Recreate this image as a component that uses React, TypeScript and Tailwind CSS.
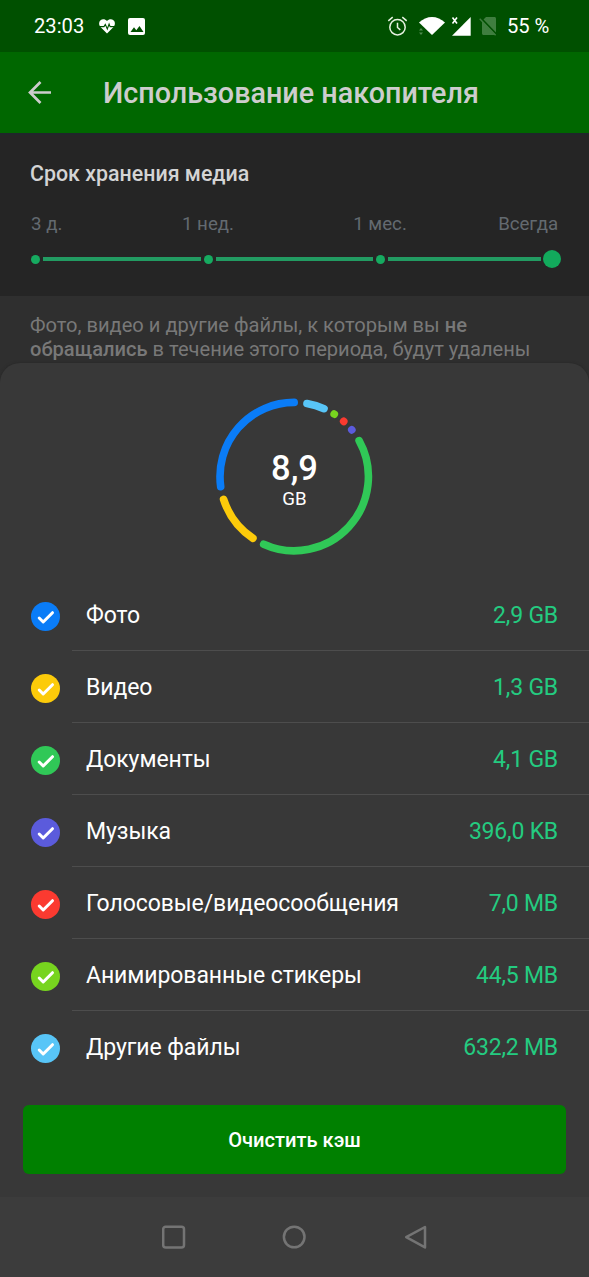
const categories = [
  { name: 'Фото', size: '2,9 GB', color: '#0a7cf7' },
  { name: 'Видео', size: '1,3 GB', color: '#fccb0a' },
  { name: 'Документы', size: '4,1 GB', color: '#30c857' },
  { name: 'Музыка', size: '396,0 KB', color: '#5b5bdc' },
  { name: 'Голосовые/видеосообщения', size: '7,0 MB', color: '#fb3a30' },
  { name: 'Анимированные стикеры', size: '44,5 MB', color: '#77d41f' },
  { name: 'Другие файлы', size: '632,2 MB', color: '#58c5f7' },
]

// angles in degrees, clockwise from the top
const segments = [
  { from: 262.2, to: 360, color: '#0a7cf7' },
  { from: 213.8, to: 252.2, color: '#fccb0a' },
  { from: 61, to: 204.3, color: '#30c857' },
  { from: 50.9, to: 51, color: '#5b5bdc' },
  { from: 41.8, to: 41.9, color: '#fb3a30' },
  { from: 32.6, to: 32.7, color: '#77d41f' },
  { from: 9.9, to: 23.7, color: '#58c5f7' },
]

const CENTER_X = 79.2
const CENTER_Y = 79.6
const RADIUS = 74.2

function point(angle: number) {
  const rad = (angle * Math.PI) / 180
  return `${(CENTER_X + RADIUS * Math.sin(rad)).toFixed(2)} ${(CENTER_Y - RADIUS * Math.cos(rad)).toFixed(2)}`
}

function StatusBar() {
  return (
    <div className="flex h-[52px] items-center bg-[#005000] pl-[34px] text-[20.2px] text-white">
      <span className="w-[65px] leading-none">23:03</span>
      <svg className="h-[15px] w-[16px]" viewBox="0 0 16 15">
        <path fill="#fff" d="M8 14.5 1.5 8C-.3 6-.3 3 1.300 1.500 3.200-.3 6-.2 8 2c2-2.200 4.800-2.300 6.700-.5C16.300 3 16.300 6 14.500 8z" />
        <path fill="none" stroke="#005000" strokeWidth="1.100" d="M0 7.600h5l1.300-2.200 2 4.600 1.800-5 1 2.600H16" />
      </svg>
      <svg className="ml-[13px] h-[17px] w-[17px]" viewBox="0 0 17 17">
        <rect width="17" height="17" rx="2" fill="#fff" />
        <path fill="#005000" d="M2.500 14 6 9.300l2.300 3L11.500 8l4 6z" />
      </svg>
      <svg className="ml-[242px] h-[20px] w-[20px]" viewBox="0 0 20 20" fill="none" stroke="#e6f2e0" strokeWidth="1.500">
        <circle cx="10.500" cy="11.200" r="7.700" />
        <path d="M10.500 6.700v4.800l2.800 2.300M1.300 4.800 5.700 1.200M19.700 4.800l-4.400-3.600" />
      </svg>
      <svg className="ml-[12px] h-[20px] w-[27px]" viewBox="0 0 27 20">
        <path fill="#fff" d="M0 6.500C7.500-1 18.500-1 26 6.500L13 19z" />
        <path fill="#4f8b4f" d="m0 14.500 2-2.600 2 2.600zM0 16.500l2 2.500 2-2.500z" />
      </svg>
      <svg className="ml-[5px] h-[20px] w-[20px]" viewBox="0 0 20 20">
        <path fill="#fff" d="M19.700 1v18.700H1z" />
        <path fill="none" stroke="#fff" strokeWidth="1.600" d="m1.500 1.500 4.500 6M6 1.500l-4.500 6" />
      </svg>
      <svg className="ml-[8px] h-[20px] w-[18px]" viewBox="0 0 18 20">
        <path fill="#3f7e3f" d="M7 1h8.500c.8 0 1.500.7 1.500 1.500v15c0 .8-.7 1.500-1.500 1.500h-11C3.700 19 3 18.300 3 17.500V5z" />
        <path fill="none" stroke="#005000" strokeWidth="1.800" d="M2 2.200 18 18.800" />
        <path fill="none" stroke="#3f7e3f" strokeWidth="1.400" d="M.7 2.800 16.600 19.300" />
      </svg>
      <span className="ml-[10px] leading-none tracking-[-0.1px]">55 %</span>
    </div>
  )
}

function AppBar() {
  return (
    <header className="flex h-[81px] items-center bg-[#006700] pl-[28px] text-[#cdcdcd]">
      <svg className="h-[24px] w-[24px]" viewBox="0 0 24 24" fill="none" stroke="currentColor" strokeWidth="2.700">
        <path d="M23 11.500H2.500M12.500 1 2 11.500 12.500 22" />
      </svg>
      <h1 className="mt-px ml-[51px] text-[28.750px] leading-none font-medium whitespace-nowrap">Использование накопителя</h1>
    </header>
  )
}

function KeepMedia() {
  return (
    <section className="h-[163px] border-t-2 border-[#20262a] bg-[#252525] pl-[31px]">
      <h2 className="-ml-px pt-[26px] text-[21.400px] leading-[26px] font-medium text-[#d4d4d4]">Срок хранения медиа</h2>
      <div className="mt-[25px] flex w-[527px] text-[18.700px] leading-[24px] text-[#636a70]">
        <span className="w-[91px]">3 д.</span>
        <span className="w-[172px] text-center">1 нед.</span>
        <span className="w-[172px] text-center">1 мес.</span>
        <span className="flex-1 text-right tracking-[-0.050px]">Всегда</span>
      </div>
      <div className="mt-[14px] flex h-[18px] items-center gap-[3px]">
        <i className="size-[9px] rounded-full bg-[#16aa60]" />
        <i className="h-[4px] w-[157.500px] bg-[#229b62]" />
        <i className="size-[9px] rounded-full bg-[#16aa60]" />
        <i className="h-[4px] w-[157px] bg-[#229b62]" />
        <i className="size-[9px] rounded-full bg-[#16aa60]" />
        <i className="h-[4px] w-[153.500px] bg-[#229b62]" />
        <i className="-ml-px size-[18px] rounded-full bg-[#12aa5c]" />
      </div>
    </section>
  )
}

function UsageRing() {
  return (
    <div className="grid place-items-center pt-[34px]">
      <svg className="col-start-1 row-start-1 size-[160px]" viewBox="0 0 160 160" fill="none" strokeWidth="7.600" strokeLinecap="round">
        {segments.map((s) => (
          <path
            key={s.color}
            stroke={s.color}
            d={`M${point(s.from)}A${RADIUS} ${RADIUS} 0 0 1 ${point(s.to)}`}
          />
        ))}
      </svg>
      <div className="col-start-1 row-start-1 pt-[8px] text-center text-white">
        <div className="text-[34.500px] leading-[36px] font-medium">8,9</div>
        <div className="text-[18.700px] leading-[26px]">GB</div>
      </div>
    </div>
  )
}

function CategoryRow({ name, size, color, last }: { name: string; size: string; color: string; last: boolean }) {
  return (
    <li className="flex h-[72px] pl-[31px]">
      <span className="mt-[23px] grid size-[29px] place-items-center rounded-full" style={{ backgroundColor: color }}>
        <svg className="size-[29px]" viewBox="0 0 29 29" fill="none" stroke="#fff" strokeWidth="3" strokeLinecap="round" strokeLinejoin="round">
          <path d="m8.200 16 4 4 9.300-9.300" />
        </svg>
      </span>
      <div className={`ml-[12px] flex flex-1 justify-between border-b pt-[23px] pr-[31px] pl-[14px] text-[23px] leading-[28px] ${last ? 'border-transparent' : 'border-[#4d4d4d]'}`}>
        <span className="tracking-[-0.080px] text-white">{name}</span>
        <span className="tracking-[-0.200px] text-[#24cb80]">{size}</span>
      </div>
    </li>
  )
}

function NavBar() {
  return (
    <nav className="flex h-[80px] items-center bg-[#3c3c3c] pl-[162px]">
      <svg className="h-[24px] w-[266px]" viewBox="0 0 266 24" fill="none" stroke="#747474" strokeWidth="2.500" strokeLinejoin="round">
        <rect x="1.200" y="1.700" width="20.800" height="20.800" rx="2.500" />
        <circle cx="132.200" cy="12" r="10.300" />
        <path d="M263 2v20.400L244.200 12.200z" />
      </svg>
    </nav>
  )
}

export default function App() {
  return (
    <div className="flex h-[1277px] w-[589px] flex-col overflow-hidden bg-[#2f2f2f] font-[Roboto,sans-serif]">
      <StatusBar />
      <AppBar />
      <KeepMedia />
      <p className="h-[67px] pt-[17px] pl-[30px] text-[20.130px] leading-[24px] whitespace-nowrap text-[#787878]">
        Фото, видео и другие файлы, к которым вы <b className="font-medium">не</b>
        <br />
        <b className="font-medium">обращались</b> в течение этого периода, будут удалены
      </p>
      <main className="flex h-[834px] flex-col rounded-t-[20px] bg-[#383838] shadow-[0_0_3px_#262626]">
        <UsageRing />
        <ul className="mt-[22px]">
          {categories.map((c, i) => (
            <CategoryRow key={c.name} {...c} last={i === categories.length - 1} />
          ))}
        </ul>
        <button className="mx-[23px] mt-[22px] h-[69px] rounded-[6px] bg-[#008000] pt-[2px] text-[20.100px] font-medium text-white">
          Очистить кэш
        </button>
      </main>
      <NavBar />
    </div>
  )
}
